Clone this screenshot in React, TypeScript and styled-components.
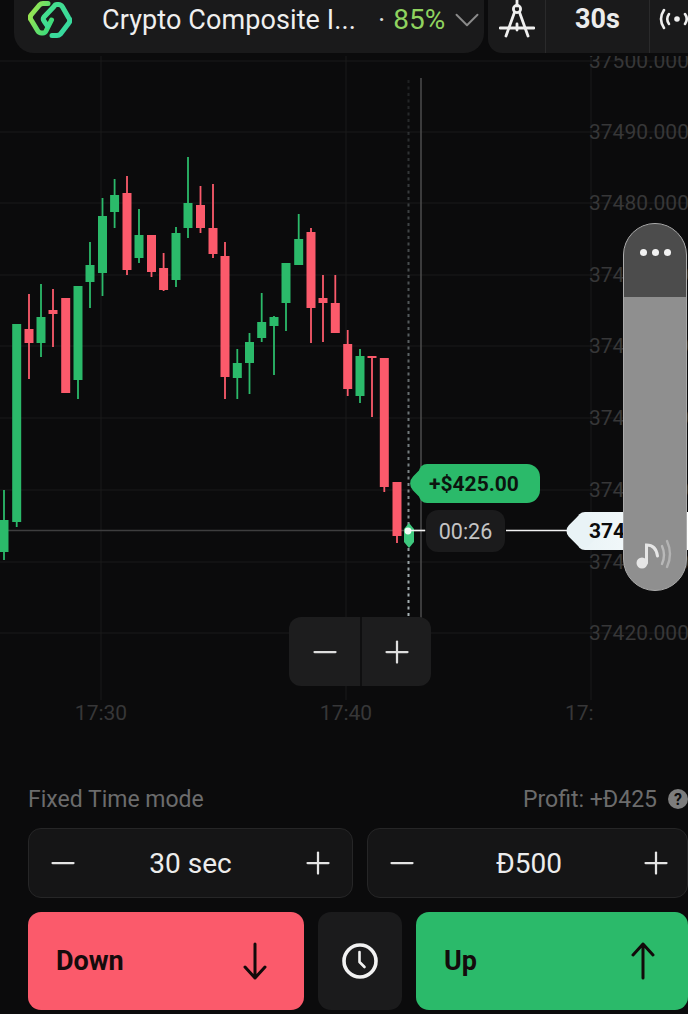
import React from "react";
import styled, { createGlobalStyle } from "styled-components";
import { Minus, Plus, ChevronDown } from "lucide-react";

const GlobalStyle = createGlobalStyle`
  html, body {
    margin: 0;
    padding: 0;
    background: #0b0b0c;
    font-family: Roboto, "Liberation Sans", sans-serif;
  }
`;

const GREEN = "#2bba6a";
const RED = "#fb5a6b";

// Page
const Screen = styled.div`
  position: relative;
  width: 688px;
  height: 1014px;
  overflow: hidden;
  background: #0b0b0c;
  display: flex;
  flex-direction: column;
`;

// Top bar
const TopBar = styled.div`
  height: 53px;
  flex: none;
  display: flex;
  gap: 4px;
  padding-left: 14px;
`;

const AssetPill = styled.div`
  width: 470px;
  box-sizing: border-box;
  padding-bottom: 14px;
  display: flex;
  align-items: center;
  background: #1a1a1b;
  border-radius: 0 0 20px 20px;
`;

const LogoBox = styled.div`
  width: 58px;
  margin-right: 30px;
  flex: none;
  display: flex;
  align-items: center;
  justify-content: flex-end;
`;

const AssetName = styled.span`
  width: 276px;
  flex: none;
  font-size: 27px;
  color: #efefef;
  white-space: nowrap;
  letter-spacing: 0.1px;
`;

const Payout = styled.span`
  font-size: 28px;
  color: #8fd35f;
  white-space: nowrap;
  width: 68px;
  flex: none;
`;

const PayoutDot = styled.span`
  color: #dcdcdc;
  margin-right: 8px;
`;

const ToolGroup = styled.div`
  flex: 1;
  display: flex;
  background: #1a1a1b;
  border-radius: 0 0 0 14px;
  overflow: hidden;
`;

const ToolCell = styled.div<{ $width: number }>`
  width: ${(p) => p.$width}px;
  box-sizing: border-box;
  padding-bottom: 15px;
  flex: none;
  display: flex;
  align-items: center;
  justify-content: center;
  border-left: 1px solid #2a2a2b;
  font-size: 27px;
  font-weight: 700;
  color: #ececec;

  &:first-child {
    border-left: none;
  }
`;

const BroadcastCell = styled(ToolCell)`
  justify-content: flex-start;
  padding-left: 8px;
`;

// Chart
const ChartArea = styled.div`
  position: relative;
  height: 717px;
  flex: none;
  overflow: hidden;
`;

const ChartSvg = styled.svg`
  display: block;
`;

// the strip under the top bar hides the top of the first price label
const ChartTopEdge = styled.div`
  position: absolute;
  left: 0;
  right: 0;
  top: 0;
  height: 3px;
  background: #0b0b0c;
`;

const AxisLabel = styled.text`
  font-family: Roboto, "Liberation Sans", sans-serif;
  font-size: 21px;
  fill: #373738;
`;

const ProfitBadge = styled.div`
  position: absolute;
  left: 419px;
  top: 411px;
  width: 121px;
  height: 39px;
  padding-right: 11px;
  box-sizing: border-box;
  display: flex;
  align-items: center;
  justify-content: center;
  background: ${GREEN};
  border-radius: 8px 13px 13px 8px;
  font-size: 21px;
  font-weight: 700;
  color: #0c140f;

  &::before {
    content: "";
    position: absolute;
    left: -7px;
    top: 5px;
    width: 29px;
    height: 29px;
    background: ${GREEN};
    border-radius: 10px;
    transform: rotate(45deg);
  }
`;

const BadgeText = styled.span`
  position: relative;
`;

const TimerChip = styled.div`
  position: absolute;
  left: 426px;
  top: 457px;
  width: 79px;
  height: 42px;
  display: flex;
  align-items: center;
  justify-content: center;
  background: #1b1b1c;
  border-radius: 12px;
  font-size: 21.5px;
  color: #c4c4c4;
`;

const PriceTag = styled.div`
  position: absolute;
  left: 577px;
  top: 459px;
  width: 120px;
  height: 38px;
  display: flex;
  align-items: center;
  padding-left: 12px;
  background: linear-gradient(90deg, #e9f3f6, #ffffff);
  border-radius: 8px 0 0 8px;
  font-size: 21px;
  font-weight: 700;
  color: #0b0b0c;

  &::before {
    content: "";
    position: absolute;
    left: -8px;
    top: 5px;
    width: 28px;
    height: 28px;
    background: #e9f3f6;
    border-radius: 8px;
    transform: rotate(45deg);
  }
`;

const PriceText = styled.span`
  position: relative;
`;

const ZoomControl = styled.div`
  position: absolute;
  left: 289px;
  top: 564px;
  width: 142px;
  height: 69px;
  display: grid;
  grid-template-columns: 1fr 1fr;
  background: #1d1d1e;
  border-radius: 12px;
`;

const ZoomButton = styled.div`
  display: flex;
  align-items: center;
  justify-content: center;
  color: #dedede;

  & + & {
    border-left: 2px solid #0f0f10;
  }
`;

const SoundSlider = styled.div`
  position: absolute;
  left: 623px;
  top: 170px;
  width: 64px;
  height: 368px;
  box-sizing: border-box;
  display: flex;
  flex-direction: column;
  background: #8f8f8f;
  border: 1.5px solid #ababab;
  border-radius: 32px;
  overflow: hidden;
`;

const SliderHead = styled.div`
  height: 73px;
  flex: none;
  display: flex;
  gap: 5px;
  align-items: flex-start;
  justify-content: center;
  padding-top: 25px;
  box-sizing: border-box;
  background: #4c4c4c;
`;

const SliderDot = styled.span`
  width: 7px;
  height: 7px;
  border-radius: 50%;
  background: #f2f2f2;
`;

const SliderFoot = styled.div`
  margin-top: auto;
  height: 56px;
  flex: none;
  display: flex;
  justify-content: center;
`;

// Bottom controls
const ModeRow = styled.div`
  height: 58px;
  flex: none;
  display: flex;
  align-items: center;
  justify-content: space-between;
  padding: 0 0 0 28px;
  font-size: 23px;
  color: #6c6c6c;
`;

const ProfitInfo = styled.div`
  display: flex;
  align-items: center;
  gap: 11px;
`;

const HelpMark = styled.span`
  width: 20px;
  height: 20px;
  border-radius: 50%;
  background: #7d7d7d;
  color: #0b0b0c;
  font-size: 16px;
  font-weight: 700;
  display: flex;
  align-items: center;
  justify-content: center;
`;

const StepperRow = styled.div`
  display: grid;
  grid-template-columns: 325px 321px;
  gap: 14px;
  padding-left: 28px;
  flex: none;
`;

const Stepper = styled.div<{ $endPad: number }>`
  height: 70px;
  box-sizing: border-box;
  display: flex;
  align-items: center;
  justify-content: space-between;
  padding: 0 ${(p) => p.$endPad}px 0 16px;
  background: #151516;
  border: 1px solid #262627;
  border-radius: 13px;
  font-size: 28px;
  color: #ececec;
`;

const StepIcon = styled.span`
  display: flex;
  color: #e4e4e4;
`;

const ActionRow = styled.div`
  display: grid;
  grid-template-columns: 276px 84px 272px;
  gap: 14px;
  margin-top: 14px;
  padding-left: 28px;
  flex: none;
`;

const TradeButton = styled.div<{ $tone: "up" | "down" }>`
  height: 98px;
  box-sizing: border-box;
  display: flex;
  align-items: center;
  justify-content: space-between;
  padding: 0 ${(p) => (p.$tone === "up" ? 33 : 37)}px 0 28px;
  background: ${(p) => (p.$tone === "up" ? GREEN : RED)};
  border-radius: 13px;
  font-size: 27px;
  font-weight: 700;
  color: #140b0c;
`;

const TimerButton = styled.div`
  height: 98px;
  display: flex;
  align-items: center;
  justify-content: center;
  background: #1b1b1c;
  border-radius: 13px;
`;

// [x, bodyTop, bodyBottom, wickTop, wickBottom, up?]
type Candle = [number, number, number, number, number, boolean];

const candles: Candle[] = [
  [4, 520, 552, 490, 560, true],
  [16.7, 324, 522, 324, 527, true],
  [29, 329, 343, 294, 379, false],
  [41, 317, 343, 284, 357, true],
  [53, 310, 314, 289, 347, false],
  [65.7, 298, 393, 298, 393, false],
  [78, 286, 380, 286, 399, true],
  [90, 265, 282, 242, 308, true],
  [102.5, 216, 273, 198, 296, true],
  [114.6, 195, 212, 179, 228, true],
  [127, 193, 270, 176, 275, false],
  [139, 235, 258, 209, 263, true],
  [151.5, 235, 272, 235, 277, false],
  [163.6, 268, 290, 253, 291, false],
  [176, 233, 280, 227, 287, true],
  [188, 203, 228, 157, 238, true],
  [200.5, 205, 228, 186, 233, false],
  [213, 228, 254, 184, 258, false],
  [225, 256, 377, 242, 399, false],
  [237.3, 363, 378, 349, 399, true],
  [249.5, 342, 363, 333, 394, true],
  [261.7, 322, 338, 293, 342, true],
  [274, 317, 326, 316, 375, true],
  [286, 263, 303, 263, 331, true],
  [298.7, 239, 265, 214, 265, true],
  [311, 232, 308, 228, 343, false],
  [323, 298, 303, 275, 342, false],
  [335.3, 303, 333, 275, 333, false],
  [347.7, 344, 389, 330, 396, false],
  [360, 356, 396, 349, 403, true],
  [372, 356, 358, 356, 417, false],
  [384.3, 358, 487, 358, 492, false],
  [397, 482, 536, 482, 543, false],
];

const gridRows = [61, 132, 203, 275, 346, 418, 490, 562, 633];
const priceLabels = [
  "37500.000",
  "37490.000",
  "37480.000",
  "37470.000",
  "37460.000",
  "37450.000",
  "37440.000",
  "37430.000",
  "37420.000",
];
const gridCols = [101, 346, 591];

const Logo: React.FC = () => (
  <svg width="44" height="39" viewBox="0 0 44 39" fill="none">
    <defs>
      <linearGradient id="linkLeft" x1="0" y1="0" x2="1" y2="0.6">
        <stop offset="0" stopColor="#a6e64c" />
        <stop offset="1" stopColor="#3fdc7a" />
      </linearGradient>
      <linearGradient id="linkRight" x1="0" y1="0" x2="1" y2="1">
        <stop offset="0" stopColor="#47e08a" />
        <stop offset="1" stopColor="#35d8a2" />
      </linearGradient>
    </defs>
    <path
      d="M20 3.5H15Q13 3.5 11.5 5L3.5 14.5Q1 17.5 3.5 20.5L9.5 30.5Q11 33 13.5 33H15Q17 33 18 31L23.5 20"
      stroke="url(#linkLeft)"
      strokeWidth="5"
      strokeLinecap="round"
      strokeLinejoin="round"
    />
    <path
      d="M24 35.5H29Q31 35.5 32.5 34L40.5 23.5Q43 20.5 40.5 17.5L34.5 7Q33 4.5 30.5 4.5H29Q27 4.5 26 6.5L16 17Q14.5 19 16 21L19.5 26"
      stroke="url(#linkRight)"
      strokeWidth="5"
      strokeLinecap="round"
      strokeLinejoin="round"
    />
  </svg>
);

const CompassIcon: React.FC = () => (
  <svg width="36" height="38" viewBox="0 0 36 38" fill="none" stroke="#efefef" strokeWidth="2.8" strokeLinecap="round">
    <path d="M18 0V6" />
    <circle cx="18" cy="9" r="3.6" />
    <path d="M15.6 12L7 36M20.4 12L29 36" />
    <path d="M1 28H35" />
    <path d="M18 24V30" />
  </svg>
);

const BroadcastIcon: React.FC = () => (
  <svg width="38" height="24" viewBox="0 0 38 24" fill="none" stroke="#efefef" strokeWidth="2.6" strokeLinecap="round">
    <path d="M6 3Q0 12 6 21" />
    <path d="M11 7Q7.5 12 11 17" />
    <circle cx="19" cy="12" r="2.8" fill="#efefef" stroke="none" />
    <path d="M27 7Q30.5 12 27 17" />
    <path d="M32 3Q38 12 32 21" />
  </svg>
);

const NoteIcon: React.FC = () => (
  <svg width="40" height="40" viewBox="0 0 40 40" fill="none">
    <circle cx="7" cy="29" r="5.5" fill="#e6e6e6" />
    <path d="M11.5 29V11Q21 11 22.5 22" stroke="#e6e6e6" strokeWidth="3" strokeLinecap="round" />
    <path d="M27 12Q31 21 27 30" stroke="#b9b9b9" strokeWidth="2.4" strokeLinecap="round" />
    <path d="M32 7Q38 20 32 33" stroke="#b3b3b3" strokeWidth="2.4" strokeLinecap="round" />
  </svg>
);

const ArrowIcon: React.FC<{ dir: "up" | "down" }> = ({ dir }) => (
  <svg width="24" height="38" viewBox="0 0 24 38" fill="none" stroke="#120a0a" strokeWidth="3" strokeLinecap="round" strokeLinejoin="round">
    {dir === "down" ? <path d="M12 2V36M2 25L12 36L22 25" /> : <path d="M12 36V2M2 13L12 2L22 13" />}
  </svg>
);

const ClockIcon: React.FC = () => (
  <svg width="38" height="38" viewBox="0 0 38 38" fill="none" stroke="#f2f2f2" strokeLinecap="round" strokeLinejoin="round">
    <circle cx="19" cy="19" r="16" strokeWidth="3.6" />
    <path d="M18.5 10V20L23.5 25" strokeWidth="2.6" />
  </svg>
);

const App: React.FC = () => {
  return (
    <Screen>
      <GlobalStyle />
      <TopBar>
        <AssetPill>
          <LogoBox>
            <Logo />
          </LogoBox>
          <AssetName>Crypto Composite I...</AssetName>
          <Payout>
            <PayoutDot>·</PayoutDot>85%
          </Payout>
          <ChevronDown size={42} color="#8a8a8a" strokeWidth={1.1} style={{ flex: "none" }} />
        </AssetPill>
        <ToolGroup>
          <ToolCell $width={57}>
            <CompassIcon />
          </ToolCell>
          <ToolCell $width={104}>30s</ToolCell>
          <BroadcastCell $width={60}>
            <BroadcastIcon />
          </BroadcastCell>
        </ToolGroup>
      </TopBar>

      <ChartArea>
        <ChartSvg width="688" height="717" viewBox="0 53 688 717">
          <defs>
            <linearGradient id="dotFade" gradientUnits="userSpaceOnUse" x1="0" y1="80" x2="0" y2="618">
              <stop offset="0" stopColor="#8f9a9d" stopOpacity="0.15" />
              <stop offset="0.5" stopColor="#8f9a9d" stopOpacity="0.6" />
              <stop offset="1" stopColor="#a8b3b6" />
            </linearGradient>
          </defs>
          {gridRows.map((y) => (
            <line key={y} x1="0" x2="688" y1={y} y2={y} stroke="#1a1a1b" strokeWidth="1" />
          ))}
          {gridCols.map((x) => (
            <line key={x} x1={x} x2={x} y1="53" y2="700" stroke="#1a1a1b" strokeWidth="1" />
          ))}
          {priceLabels.map((label, i) => (
            <AxisLabel key={label} x="589" y={gridRows[i] + 7}>
              {label}
            </AxisLabel>
          ))}
          <AxisLabel x="101" y="720" textAnchor="middle">17:30</AxisLabel>
          <AxisLabel x="346" y="720" textAnchor="middle">17:40</AxisLabel>
          <AxisLabel x="565" y="720">17:</AxisLabel>

          <line x1="0" x2="426" y1="530.5" y2="530.5" stroke="#3e3e3f" strokeWidth="1.5" />
          <line x1="421" x2="421" y1="78" y2="618" stroke="#4c4c4d" strokeWidth="1.5" />

          {candles.map(([x, top, bottom, wickTop, wickBottom, up]) => (
            <g key={x} fill={up ? GREEN : RED}>
              <rect x={x - 0.9} y={wickTop} width="1.8" height={wickBottom - wickTop} />
              <rect x={x - 4.5} y={top} width="9" height={bottom - top} />
            </g>
          ))}

          <line x1="408.5" x2="408.5" y1="80" y2="618" stroke="url(#dotFade)" strokeWidth="2" strokeDasharray="3 3.5" />
          <path d="M409 523L414 529V542L409 548L404 542V529Z" fill="#3ec97e" />
          <line x1="408" x2="425" y1="530.5" y2="530.5" stroke="#f2f2f2" strokeWidth="1.6" />
          <line x1="506" x2="572" y1="530.5" y2="530.5" stroke="#f2f2f2" strokeWidth="1.6" />
          <circle cx="408" cy="531" r="3.4" fill="#f4fff8" />
        </ChartSvg>

        <ChartTopEdge />
        <ProfitBadge>
          <BadgeText>+$425.00</BadgeText>
        </ProfitBadge>
        <TimerChip>00:26</TimerChip>
        <PriceTag>
          <PriceText>374</PriceText>
        </PriceTag>
        <ZoomControl>
          <ZoomButton>
            <Minus size={36} strokeWidth={1.5} />
          </ZoomButton>
          <ZoomButton>
            <Plus size={36} strokeWidth={1.5} />
          </ZoomButton>
        </ZoomControl>
        <SoundSlider>
          <SliderHead>
            <SliderDot />
            <SliderDot />
            <SliderDot />
          </SliderHead>
          <SliderFoot>
            <NoteIcon />
          </SliderFoot>
        </SoundSlider>
      </ChartArea>

      <ModeRow>
        <span>Fixed Time mode</span>
        <ProfitInfo>
          <span>Profit: +Đ425</span>
          <HelpMark>?</HelpMark>
        </ProfitInfo>
      </ModeRow>

      <StepperRow>
        <Stepper $endPad={16}>
          <StepIcon>
            <Minus size={36} strokeWidth={1.5} />
          </StepIcon>
          <span>30 sec</span>
          <StepIcon>
            <Plus size={36} strokeWidth={1.5} />
          </StepIcon>
        </Stepper>
        <Stepper $endPad={13}>
          <StepIcon>
            <Minus size={36} strokeWidth={1.5} />
          </StepIcon>
          <span>Đ500</span>
          <StepIcon>
            <Plus size={36} strokeWidth={1.5} />
          </StepIcon>
        </Stepper>
      </StepperRow>

      <ActionRow>
        <TradeButton $tone="down">
          <span>Down</span>
          <ArrowIcon dir="down" />
        </TradeButton>
        <TimerButton>
          <ClockIcon />
        </TimerButton>
        <TradeButton $tone="up">
          <span>Up</span>
          <ArrowIcon dir="up" />
        </TradeButton>
      </ActionRow>
    </Screen>
  );
};

export default App;
